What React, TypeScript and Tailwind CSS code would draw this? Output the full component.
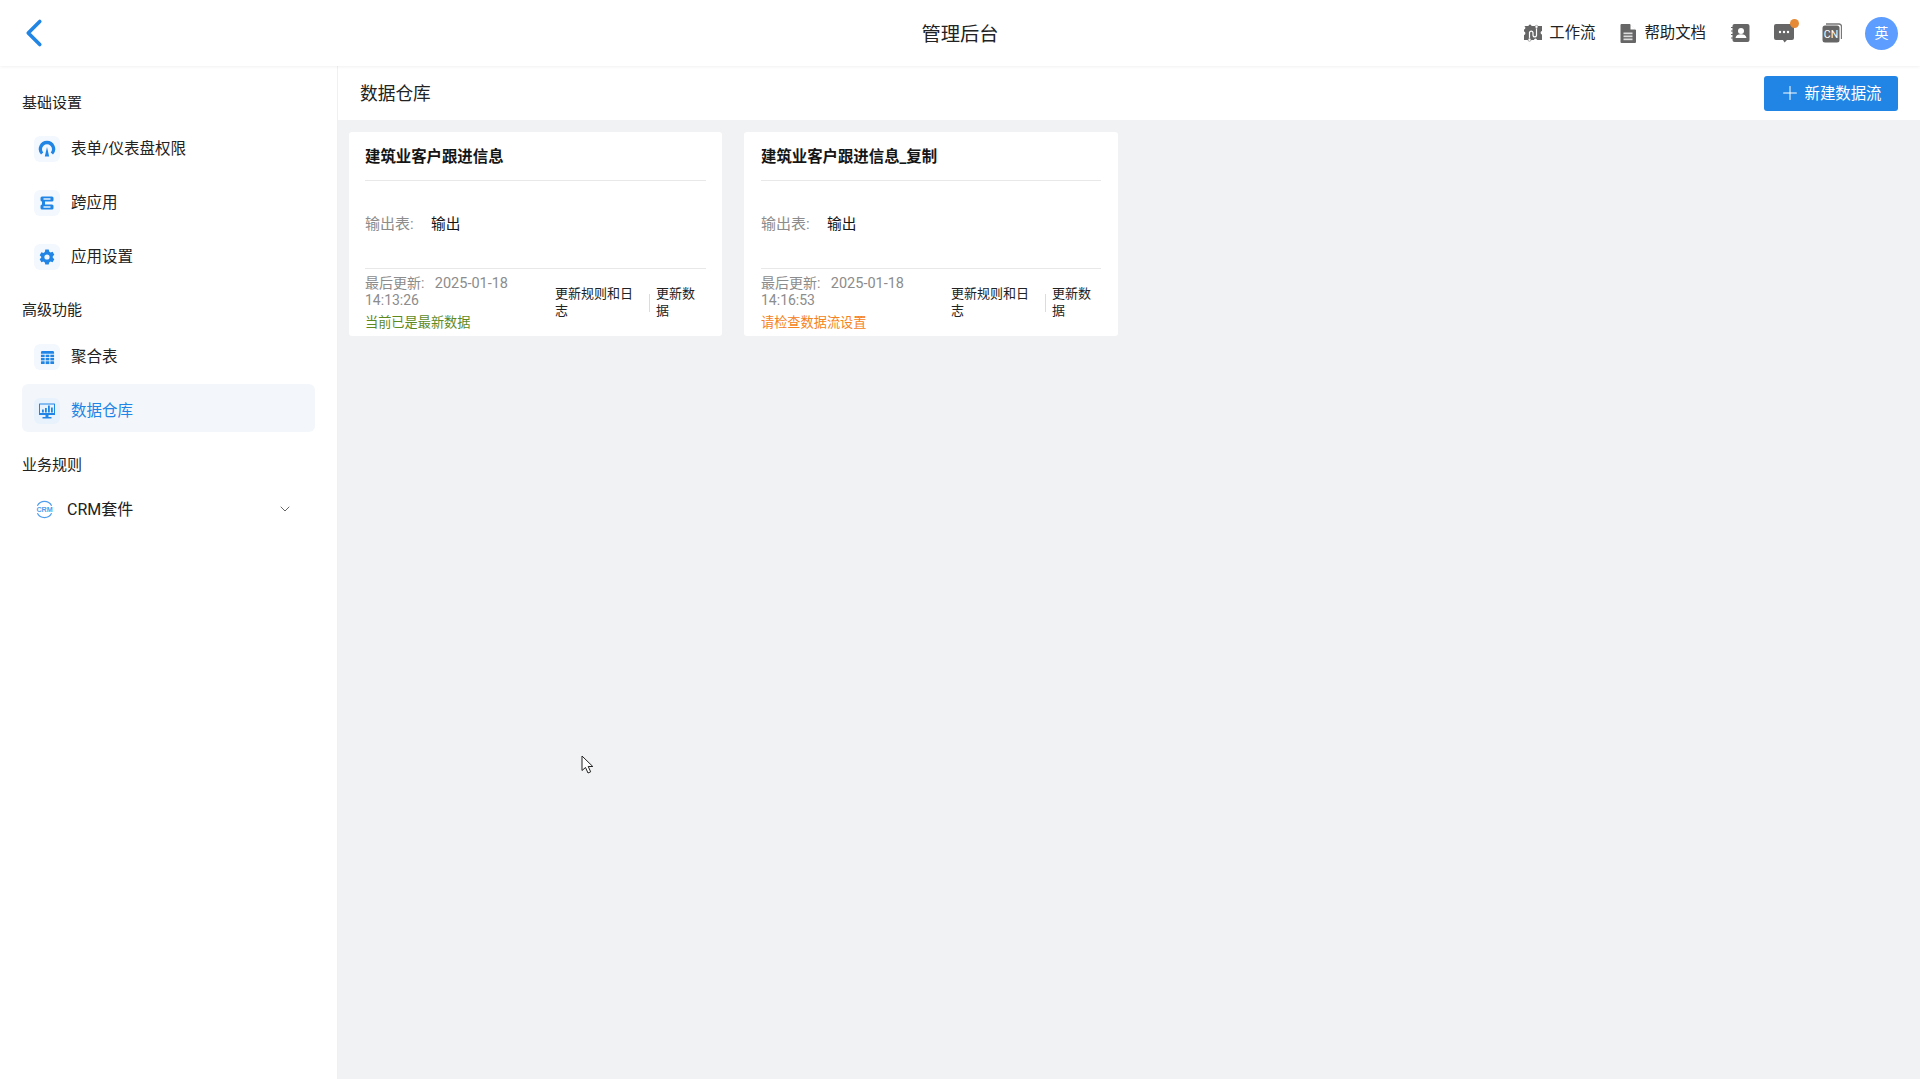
import React from "react";
import { ChevronLeft, ChevronDown, Plus } from "lucide-react";

const font = "font-['Roboto','Noto_Sans_CJK_SC',sans-serif]";

function GaugeIcon() {
  return (
    <svg viewBox="0 0 18 18" className="h-[18px] w-[18px]" fill="#2185e5">
      <path d="M9 .8a8.200 8.200 0 0 0-6 13.800l2.300-2A5 5 0 1 1 12.700 12.600l2.300 2A8.200 8.200 0 0 0 9 .8z" />
      <path d="M9 7l2.200 9.500H6.800z" />
    </svg>
  );
}

function CrossAppIcon() {
  return (
    <svg viewBox="0 0 18 18" className="h-[18px] w-[18px]" fill="#2185e5">
      <rect x="2.500" y="2.500" width="13" height="5" rx="1.500" />
      <rect x="2.500" y="10.500" width="13" height="5" rx="1.500" />
      <rect x="4" y="7" width="3" height="4" />
      <rect x="5.500" y="4.300" width="7" height="1.400" fill="#f0f7fe" />
      <rect x="5.500" y="12.300" width="7" height="1.400" fill="#f0f7fe" />
    </svg>
  );
}

function GearIcon() {
  return (
    <svg viewBox="0 0 18 18" className="h-[18px] w-[18px]">
      <path
        fill="#2185e5"
        d="M7.300 1.500h3.400l.5 2.100 1.400.8 2-.6 1.700 2.900-1.500 1.500v1.600l1.500 1.500-1.700 2.900-2-.6-1.400.8-.5 2.100H7.300l-.5-2.100-1.400-.8-2 .6-1.700-2.900 1.500-1.500V8.700L1.700 7.200l1.700-2.900 2 .6 1.400-.8z"
      />
      <circle cx="9" cy="9" r="2.600" fill="#f0f7fe" />
    </svg>
  );
}

function TableIcon() {
  return (
    <svg viewBox="0 0 16 16" className="h-[15px] w-[15px]" fill="#2185e5">
      <path d="M1 2.500A1.500 1.500 0 0 1 2.500 1h11A1.500 1.500 0 0 1 15 2.500V4H1z" />
      <rect x="1" y="5" width="4" height="2.600" />
      <rect x="6" y="5" width="4" height="2.600" />
      <rect x="11" y="5" width="4" height="2.600" />
      <rect x="1" y="8.500" width="4" height="2.600" />
      <rect x="6" y="8.500" width="4" height="2.600" />
      <rect x="11" y="8.500" width="4" height="2.600" />
      <rect x="1" y="12" width="4" height="3" rx="0.600" />
      <rect x="6" y="12" width="4" height="3" />
      <rect x="11" y="12" width="4" height="3" rx="0.600" />
    </svg>
  );
}

function MonitorIcon() {
  return (
    <svg viewBox="0 0 18 18" className="h-[18px] w-[18px]" fill="#2185e5">
      <path d="M1.500 1.500h15a.5.5 0 0 1 .5.5v10.500a.5.5 0 0 1-.5.5h-15a.5.5 0 0 1-.5-.5V2a.5.5 0 0 1 .5-.5zM2 2.500V11h14V2.500z" />
      <rect x="1" y="11" width="16" height="2" />
      <rect x="4" y="7.500" width="1.800" height="3" />
      <rect x="7" y="6" width="1.800" height="4.500" />
      <rect x="10" y="3.500" width="1.800" height="7" />
      <rect x="13" y="5.500" width="1.800" height="5" />
      <rect x="7.500" y="13" width="3" height="2.500" />
      <rect x="4.500" y="15" width="9" height="1.500" />
    </svg>
  );
}

function CrmIcon() {
  return (
    <svg viewBox="0 0 20 20" className="h-[19px] w-[19px]">
      <path d="M2.500 6a8.500 8.500 0 0 1 15 0" fill="none" stroke="#4f9ded" strokeWidth="1.300" />
      <path d="M2.500 14a8.500 8.500 0 0 0 15 0" fill="none" stroke="#4f9ded" strokeWidth="1.300" />
      <text x="10" y="12.600" textAnchor="middle" fontSize="7.500" fontWeight="700" fill="#4f9ded" fontFamily="Liberation Sans, sans-serif">
        CRM
      </text>
    </svg>
  );
}

function WorkflowIcon() {
  return (
    <svg viewBox="0 0 18 18" className="h-[18px] w-[18px]">
      <path
        fill="#666"
        d="M0 2h4.500a1.500 1.500 0 0 1 3 0H18v5a1.800 1.800 0 0 0 0 3.500V16h-5a1.500 1.500 0 0 0-3 0H0v-5a1.800 1.800 0 0 0 0-3.500V5.500a1.800 1.800 0 0 0 0-3.500z"
      />
      <path d="M5.500 15.500V8.500a1.800 1.800 0 0 1 3.500 0v3a1.800 1.800 0 0 0 3.500 0v-8" fill="none" stroke="#fff" strokeWidth="1.200" />
      <circle cx="5.500" cy="15.800" r="1.500" fill="#fff" stroke="#666" strokeWidth="0.500" />
      <circle cx="12.500" cy="2.800" r="1.500" fill="#fff" stroke="#666" strokeWidth="0.500" />
    </svg>
  );
}

function DocIcon() {
  return (
    <svg viewBox="0 0 16 19" className="h-[19px] w-4">
      <path fill="#666" d="M1.500 0H10l6 6v12a1 1 0 0 1-1 1H1.500a1 1 0 0 1-1-1V1a1 1 0 0 1 1-1z" />
      <path fill="#fff" d="M10.500 0v5.500H16z" />
      <rect x="3.500" y="8.500" width="9" height="1.700" fill="#ddd" />
      <rect x="3.500" y="11.500" width="9" height="1.700" fill="#ddd" />
      <rect x="3.500" y="14.500" width="9" height="1.700" fill="#ddd" />
    </svg>
  );
}

function ContactIcon() {
  return (
    <svg viewBox="0 0 19 18" className="h-[18px] w-[19px]">
      <rect x="1.500" y="0" width="17" height="18" rx="2" fill="#666" />
      <path d="M0 3.500h3M0 7h3M0 10.500h3M0 14h3" stroke="#666" strokeWidth="1.200" />
      <circle cx="10" cy="7" r="3" fill="#fff" />
      <path d="M4.500 14c.5-3 2.500-3.800 5.500-3.800s5 .8 5.500 3.800z" fill="#fff" />
    </svg>
  );
}

function ChatIcon() {
  return (
    <svg viewBox="0 0 20 19" className="h-[19px] w-5">
      <path fill="#666" d="M2 0h16a2 2 0 0 1 2 2v12a2 2 0 0 1-2 2h-5l-2.500 2.600L9 16H2a2 2 0 0 1-2-2V2a2 2 0 0 1 2-2z" />
      <circle cx="6" cy="8" r="1.200" fill="#fff" />
      <circle cx="10" cy="8" r="1.200" fill="#fff" />
      <circle cx="14" cy="8" r="1.200" fill="#fff" />
    </svg>
  );
}

function LangIcon() {
  return (
    <svg viewBox="0 0 20 20" className="h-5 w-5">
      <path d="M4 1h13a2.500 2.500 0 0 1 2.500 2.500V16" fill="none" stroke="#777" strokeWidth="1.300" />
      <rect x="0.500" y="2.500" width="17" height="17" rx="2.500" fill="#666" />
      <text x="9" y="15" textAnchor="middle" fontSize="10.500" fill="#fff" fontFamily="Roboto, sans-serif">
        CN
      </text>
    </svg>
  );
}

function Cursor() {
  return (
    <svg viewBox="0 0 14 20" className="absolute left-[581px] top-[755px] h-5 w-[14px]">
      <path d="M1 1v14.500l3.500-3 2.500 5.500 2.700-1.200-2.500-5.300h4.600z" fill="#fff" stroke="#222" strokeWidth="1" />
    </svg>
  );
}

function SectionTitle({ children, className }: { children: React.ReactNode; className: string }) {
  return <div className={`pl-[22px] text-[15px] leading-5 text-[#222] ${className}`}>{children}</div>;
}

function NavItem({ icon, label, active }: { icon: React.ReactNode; label: string; active?: boolean }) {
  return (
    <div
      className={`mx-[22px] flex h-12 w-[293px] items-center rounded-md pl-3 ${
        active ? "-mt-[3px] mb-[3px] bg-[#f3f6fb] pt-[6px]" : ""
      }`}
    >
      <span className={`flex h-[26px] w-[26px] items-center justify-center rounded-md ${active ? "bg-[#e8f2fd]" : "bg-[#f3f8fe]"}`}>
        {icon}
      </span>
      <span className={`ml-[11px] pt-[2px] text-[15.500px] ${active ? "text-[#2185e5]" : "text-[#222]"}`}>{label}</span>
    </div>
  );
}

function FlowCard({
  title,
  time,
  status,
  statusColor,
  width,
}: {
  title: string;
  time: string;
  status: string;
  statusColor: string;
  width: string;
}) {
  return (
    <div className={`flex h-[204px] flex-col rounded-[3px] bg-white ${width}`}>
      <div className="flex h-[49px] shrink-0 items-center border-b border-[#e8e8e8] pt-[3px] text-[15.400px] font-bold text-[#151515]">
        {title}
      </div>
      <div className="flex h-[88px] shrink-0 items-center border-b border-[#e8e8e8] text-[14.700px]">
        <span className="w-[66px] text-[15px] text-[#8c8c8c]">输出表:</span>
        <span className="text-[#151515]">输出</span>
      </div>
      <div className="flex flex-1 items-center text-[13px] leading-[17px]">
        <div className="w-[190px] shrink-0 text-[14px] text-[#8c8c8c]">
          <div>
            最后更新:&nbsp;&nbsp;&nbsp;<span className="text-[14.500px]">2025-01-18</span>
          </div>
          <div>{time}</div>
          <div className={`mt-[5px] text-[13.200px] ${statusColor}`}>{status}</div>
        </div>
        <div className="-mt-[2px] w-[88px] shrink-0 text-[#222]">更新规则和日志</div>
        <div className="mx-[6px] h-[18px] w-px shrink-0 bg-[#dcdce0]" />
        <div className="-mt-[2px] w-[42px] shrink-0 text-[#222]">更新数据</div>
      </div>
    </div>
  );
}

export default function App() {
  return (
    <div className={`relative flex h-[1079px] w-[1920px] flex-col overflow-hidden bg-white ${font}`}>
      <header className="relative z-10 flex h-[66px] shrink-0 items-center justify-between bg-white pl-[11px] pr-[22px] shadow-[0_1px_3px_rgba(0,0,0,0.06)]">
        <ChevronLeft className="h-[46px] w-[46px] text-[#2185e5]" strokeWidth={1.900} />
        <div className="absolute left-0 right-0 pt-[4px] text-center text-[19.300px] text-[#222]">管理后台</div>
        <div className="relative flex items-center text-[15.400px] text-[#222]">
          <WorkflowIcon />
          <span className="ml-[7px] pt-[2px]">工作流</span>
          <span className="ml-[25px]">
            <DocIcon />
          </span>
          <span className="ml-2 pt-[2px]">帮助文档</span>
          <span className="ml-[25px]">
            <ContactIcon />
          </span>
          <span className="relative ml-6">
            <ChatIcon />
            <span className="absolute -right-[5px] -top-[5px] h-[9px] w-[9px] rounded-full bg-[#e58a36]" />
          </span>
          <span className="ml-[28px]">
            <LangIcon />
          </span>
          <span className="ml-[23px] flex h-[33px] w-[33px] items-center justify-center rounded-full bg-[#5c9dff] text-[14px] text-white">
            英
          </span>
        </div>
      </header>

      <div className="flex min-h-0 flex-1">
        <aside className="w-[338px] shrink-0 border-r border-[#f0f0f0] bg-white pt-[27px]">
          <SectionTitle className="mb-[12px]">基础设置</SectionTitle>
          <div className="flex flex-col gap-[6px]">
            <NavItem icon={<GaugeIcon />} label="表单/仪表盘权限" />
            <NavItem icon={<CrossAppIcon />} label="跨应用" />
            <NavItem icon={<GearIcon />} label="应用设置" />
          </div>
          <SectionTitle className="mb-[13px] mt-[19px]">高级功能</SectionTitle>
          <div className="flex flex-col gap-[6px]">
            <NavItem icon={<TableIcon />} label="聚合表" />
            <NavItem icon={<MonitorIcon />} label="数据仓库" active />
          </div>
          <SectionTitle className="mb-[18px] mt-[20px]">业务规则</SectionTitle>
          <div className="ml-[35px] mr-[44px] flex h-8 items-center justify-between">
            <div className="flex items-center gap-[13px] text-[16px] text-[#222]">
              <CrmIcon />
              <span className="pt-[2px]">CRM套件</span>
            </div>
            <ChevronDown className="h-4 w-4 text-[#666]" strokeWidth={1.500} />
          </div>
        </aside>

        <main className="flex min-w-0 flex-1 flex-col bg-[#f1f2f4]">
          <div className="flex h-[54px] shrink-0 items-center justify-between bg-white px-[22px]">
            <div className="pt-[2px] text-[17.700px] text-[#222]">数据仓库</div>
            <button className="flex h-[35px] w-[134px] items-center justify-center gap-[4px] rounded-[3px] bg-[#2185e5] pr-[2px] text-[15.400px] text-white">
              <Plus className="h-[22px] w-[22px]" strokeWidth={1.100} />
              <span className="pt-[3px]">新建数据流</span>
            </button>
          </div>
          <div className="flex gap-[22px] pl-[11px] pt-[12px]">
            <FlowCard
              title="建筑业客户跟进信息"
              time="14:13:26"
              status="当前已是最新数据"
              statusColor="text-[#5c8a1e]"
              width="w-[373px] px-4"
            />
            <FlowCard
              title="建筑业客户跟进信息_复制"
              time="14:16:53"
              status="请检查数据流设置"
              statusColor="text-[#f58220]"
              width="w-[374px] px-[17px]"
            />
          </div>
        </main>
      </div>
      <Cursor />
    </div>
  );
}
